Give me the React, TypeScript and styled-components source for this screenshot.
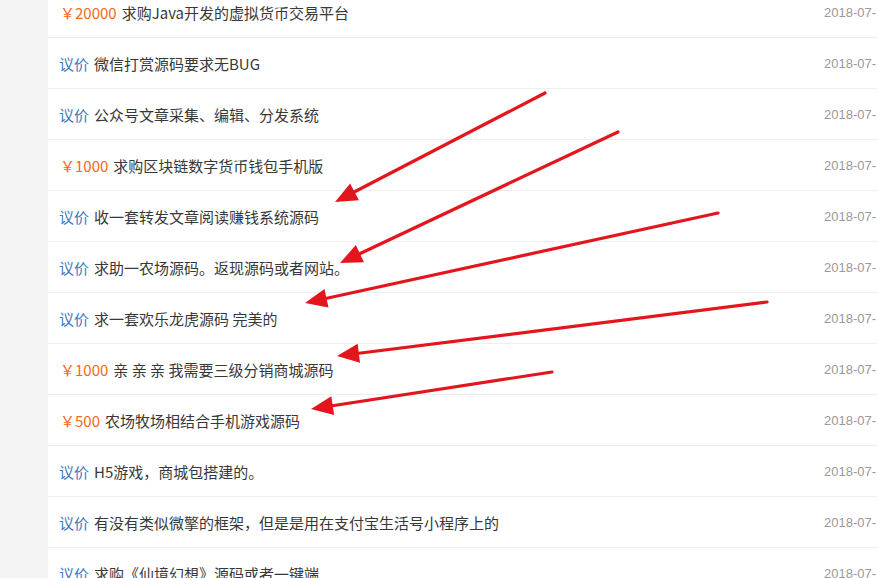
import styled, { createGlobalStyle } from "styled-components";

const GlobalStyle = createGlobalStyle`
  html, body {
    margin: 0;
    padding: 0;
    background: #f4f4f4;
    overflow: hidden;
  }
  body {
    width: 877px;
    height: 578px;
    font-family: "Microsoft YaHei", "Noto Sans CJK SC", "Liberation Sans", sans-serif;
  }
`;

interface Demand {
  price?: number;
  title: string;
  date: string;
}

const demands: Demand[] = [
  { price: 20000, title: "求购Java开发的虚拟货币交易平台", date: "2018-07-" },
  { title: "微信打赏源码要求无BUG", date: "2018-07-" },
  { title: "公众号文章采集、编辑、分发系统", date: "2018-07-" },
  { price: 1000, title: "求购区块链数字货币钱包手机版", date: "2018-07-" },
  { title: "收一套转发文章阅读赚钱系统源码", date: "2018-07-" },
  { title: "求助一农场源码。返现源码或者网站。", date: "2018-07-" },
  { title: "求一套欢乐龙虎源码 完美的", date: "2018-07-" },
  { price: 1000, title: "亲 亲 亲 我需要三级分销商城源码", date: "2018-07-" },
  { price: 500, title: "农场牧场相结合手机游戏源码", date: "2018-07-" },
  { title: "H5游戏，商城包搭建的。", date: "2018-07-" },
  { title: "有没有类似微擎的框架，但是是用在支付宝生活号小程序上的", date: "2018-07-" },
  { title: "求购《仙境幻想》源码或者一键端", date: "2018-07-" },
];

// 화살표: [꼬리 x, 꼬리 y, 끝 x, 끝 y]
const arrows: [number, number, number, number][] = [
  [545, 93, 335, 202],
  [618, 132, 340, 263],
  [718, 213, 305, 303],
  [767, 302, 337, 356],
  [552, 372, 311, 409],
];

const Arrow = ({ from, to }: { from: [number, number]; to: [number, number] }) => {
  const dx = to[0] - from[0];
  const dy = to[1] - from[1];
  const len = Math.hypot(dx, dy);
  const ux = dx / len;
  const uy = dy / len;
  const headLen = 22;
  const half = 9.5;
  const bx = to[0] - ux * headLen;
  const by = to[1] - uy * headLen;
  const points = [
    `${to[0]},${to[1]}`,
    `${bx - uy * half},${by + ux * half}`,
    `${bx + uy * half},${by - ux * half}`,
  ].join(" ");
  return (
    <g>
      <line x1={from[0]} y1={from[1]} x2={bx + ux * 2} y2={by + uy * 2} stroke="#e3161e" strokeWidth={3.2} strokeLinecap="round" />
      <polygon points={points} fill="#e3161e" />
    </g>
  );
};

const App = () => {
  return (
    <>
      <GlobalStyle />
      <Page>
        <List>
          {demands.map((d, i) => (
            <Row key={i}>
              <Title>
                {d.price ? <Price>￥{d.price}</Price> : <Negotiable>议价</Negotiable>}
                <span>{d.title}</span>
              </Title>
              <DateText>{d.date}</DateText>
            </Row>
          ))}
        </List>
        <Overlay width="877" height="578" viewBox="0 0 877 578">
          {arrows.map(([x1, y1, x2, y2], i) => (
            <Arrow key={i} from={[x1, y1]} to={[x2, y2]} />
          ))}
        </Overlay>
      </Page>
    </>
  );
};

const Page = styled.div`
  position: relative;
  width: 877px;
  height: 578px;
  overflow: hidden;
  padding-left: 48px;
  box-sizing: border-box;
`;

const List = styled.ul`
  list-style: none;
  margin: -13px 0 0;
  padding: 0;
  width: 900px;
  background: #fff;
`;

const Row = styled.li`
  display: grid;
  grid-template-columns: 765px 1fr;
  align-items: center;
  height: 50px;
  padding-left: 11px;
  border-bottom: 1px solid #eeeeee;
  font-size: 15px;
  color: #383838;
`;

const Title = styled.div`
  display: flex;
  align-items: center;
  white-space: nowrap;
  padding-top: 1px;
`;

const Price = styled.span`
  color: #f36a1b;
  margin-right: 5px;
  padding-left: 1px;
`;

const Negotiable = styled.span`
  color: #3a7bc4;
  margin-right: 5px;
`;

const DateText = styled.span`
  font-family: "Liberation Sans", "Noto Sans", sans-serif;
  font-size: 13px;
  color: #999;
  white-space: nowrap;
  padding-top: 1px;
`;

const Overlay = styled.svg`
  position: absolute;
  left: 0;
  top: 0;
  pointer-events: none;
`;

export default App;
